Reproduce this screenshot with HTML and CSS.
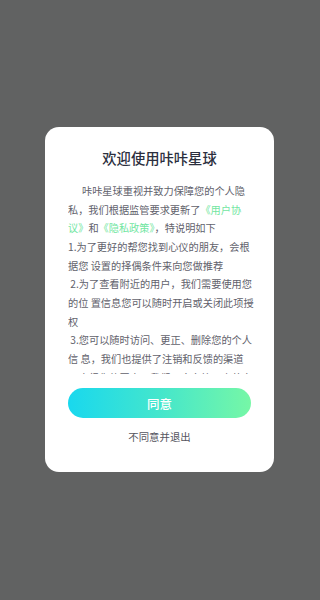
FILE: index.html
```html
<!DOCTYPE html>
<html>
<head>
<meta charset="utf-8">
<title>欢迎使用咔咔星球</title>
<link rel="stylesheet" href="styles.css">
</head>
<body>
<div class="overlay">
  <div class="dialog">
    <h1 class="title">欢迎使用咔咔星球</h1>
    <div class="content">
      <p class="line indent">咔咔星球重视并致力保障您的个人隐</p>
      <p class="line">私，我们根据监管要求更新了<span class="link">《用户协</span></p>
      <p class="line"><span class="link">议》</span>和<span class="link">《隐私政策》</span>，特说明如下</p>
      <p class="line">1.为了更好的帮您找到心仪的朋友，会根</p>
      <p class="line">据您 设置的择偶条件来向您做推荐</p>
      <p class="line">&nbsp;2.为了查看附近的用户，我们需要使用您</p>
      <p class="line">的位 置信息您可以随时开启或关闭此项授</p>
      <p class="line">权</p>
      <p class="line">&nbsp;3.您可以随时访问、更正、删除您的个人</p>
      <p class="line">信 息，我们也提供了注销和反馈的渠道</p>
      <p class="line">&nbsp;4.未经您的同意，我们不会向第三方共享</p>
      <p class="line">您的个人信息</p>
    </div>
    <button class="agree">同意</button>
    <div class="disagree">不同意并退出</div>
  </div>
</div>
</body>
</html>
```

FILE: styles.css
```css
html, body {
  margin: 0;
  padding: 0;
  background: #616262;
  font-family: "Noto Sans CJK SC", "Noto Sans", sans-serif;
}
.overlay {
  width: 320px;
  height: 600px;
  padding-top: 127px;
  box-sizing: border-box;
}
.dialog {
  width: 229px;
  height: 345px;
  margin-left: 45px;
  background: #ffffff;
  border-radius: 14px;
  padding: 21px 20px 0 23px;
  box-sizing: border-box;
  display: flex;
  flex-direction: column;
}
.title {
  margin: 0;
  font-size: 14.3px;
  line-height: 20px;
  font-weight: 500;
  color: #2c2f3e;
  text-align: center;
  padding-right: 3px;
}
.content {
  margin-top: 14px;
  height: 191.5px;
  overflow: hidden;
  color: #62626c;
  font-size: 10.2px;
}
.line {
  margin: 0;
  line-height: 18.65px;
  white-space: nowrap;
}
.indent {
  padding-left: 14px;
}
.link {
  color: #72e6a2;
}
.agree {
  margin-top: 14.5px;
  height: 30px;
  width: 183px;
  border: none;
  border-radius: 15px;
  background: linear-gradient(90deg, #19d8ee 0%, #44e6cc 50%, #76f7a6 100%);
  color: #ffffff;
  font-family: inherit;
  font-size: 12.5px;
  font-weight: 500;
  padding: 0;
}
.disagree {
  margin-top: 11px;
  text-align: center;
  font-size: 10.4px;
  line-height: 16px;
  color: #55555e;
  padding-right: 3px;
}
```
